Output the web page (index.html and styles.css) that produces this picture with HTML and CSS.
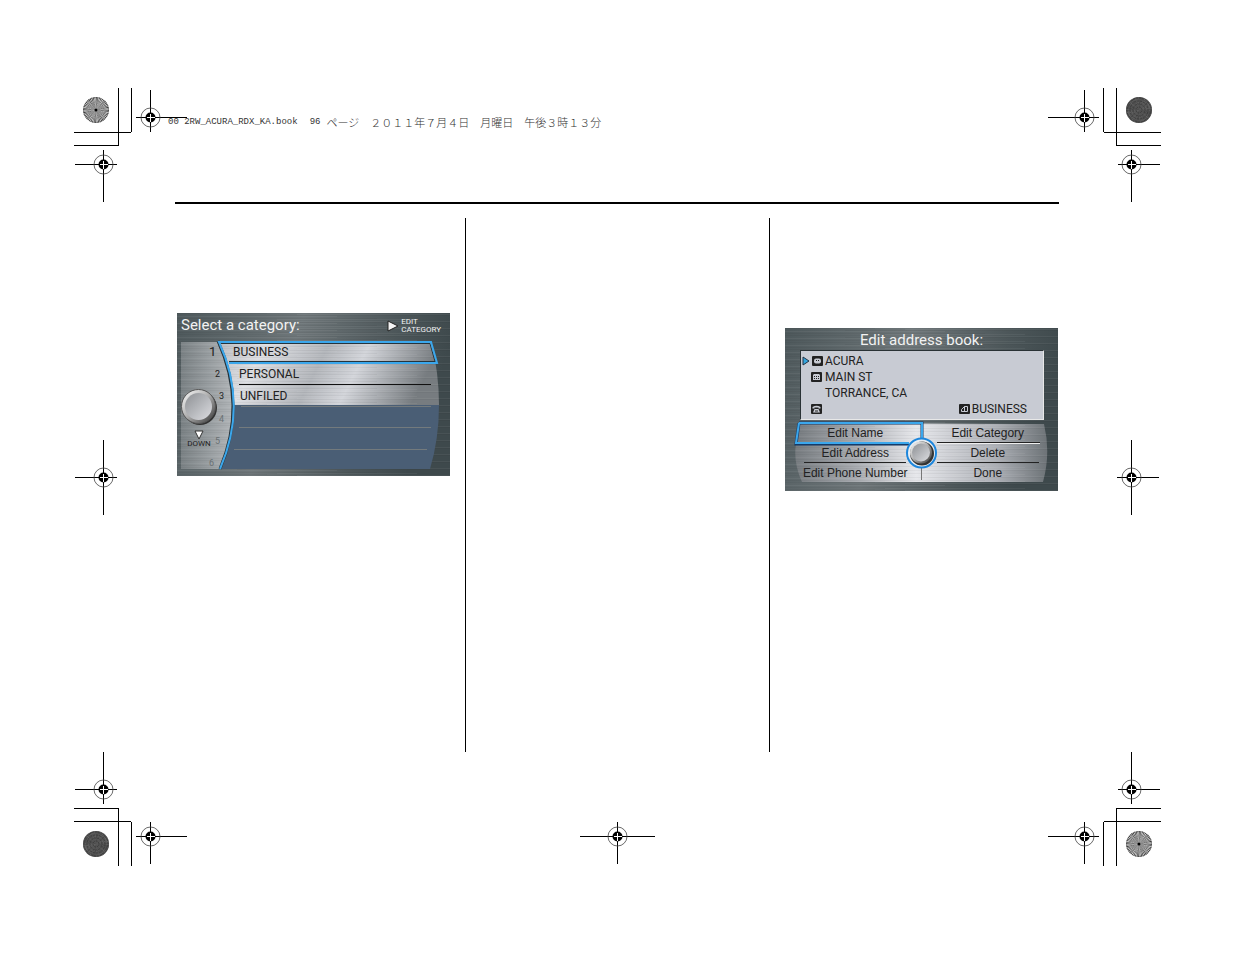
FILE: index.html
```html
<!DOCTYPE html>
<html lang="en">
<head>
    <meta charset="UTF-8">
    <meta name="viewport" content="width=device-width, initial-scale=1.0">
    <title>2RW_ACURA_RDX_KA.book</title>
    <link rel="stylesheet" href="styles.css">
</head>
<body>
    <!-- Shared shapes: register marks, corner crop marks, metal fills -->
    <svg class="defs" width="0" height="0" aria-hidden="true">
        <defs>
            <g id="target">
                <circle r="9.5" fill="none" stroke="#444" stroke-width="0.8"/>
                <circle r="5" fill="#000"/>
                <path d="M-4 0H4M0 -4V4" stroke="#fff" shape-rendering="crispEdges"/>
            </g>
            <g id="corner">
                <path d="M44.5 0V58M57.5 0V44M0 44.5H57M0 57.5H45M76.5 2V44M62 29.5H113M29.5 62V114M1 76.5H43" stroke="#000" fill="none" shape-rendering="crispEdges"/>
                <use href="#target" x="76.5" y="29.5"/>
                <use href="#target" x="29.5" y="76.5"/>
            </g>
            <g id="burst">
                <circle cx="22" cy="22" r="12.5" fill="#eee" stroke="#888" stroke-width="0.8"/>
                <circle cx="22" cy="22" r="6.5" fill="none" stroke="#333" stroke-width="13" pathLength="96" stroke-dasharray="1"/>
                <circle cx="22" cy="22" r="1.5"/>
            </g>
            <g id="disc">
                <circle cx="22" cy="22" r="13" fill="#333"/>
                <circle cx="22" cy="22" r="6.5" fill="none" stroke="#777" stroke-width="13" pathLength="120" stroke-dasharray="1"/>
                <g fill="none" stroke="#3c3c3c" stroke-dasharray="2 1">
                    <circle cx="22" cy="22" r="3"/>
                    <circle cx="22" cy="22" r="6"/>
                    <circle cx="22" cy="22" r="9"/>
                    <circle cx="22" cy="22" r="12"/>
                </g>
            </g>
            <linearGradient id="dark" x2="1" y2="0.2">
                <stop offset="0" stop-color="#4d585b"/>
                <stop offset="0.45" stop-color="#6e7679"/>
                <stop offset="0.8" stop-color="#4c5659"/>
                <stop offset="1" stop-color="#3e494c"/>
            </linearGradient>
            <linearGradient id="silver" x2="1" y2="0.15">
                <stop offset="0" stop-color="#b9bbc0"/>
                <stop offset="0.22" stop-color="#dedfe3"/>
                <stop offset="0.5" stop-color="#b2b5ba"/>
                <stop offset="0.68" stop-color="#d3d5da"/>
                <stop offset="1" stop-color="#777c80"/>
            </linearGradient>
            <linearGradient id="panel" x2="1" y2="0">
                <stop offset="0" stop-color="#7b8285"/>
                <stop offset="1" stop-color="#b2b6b9"/>
            </linearGradient>
            <linearGradient id="keys" x2="1" y2="0">
                <stop offset="0" stop-color="#777c80"/>
                <stop offset="0.25" stop-color="#abaeb3"/>
                <stop offset="0.48" stop-color="#e6e7eb"/>
                <stop offset="0.8" stop-color="#abaeb4"/>
                <stop offset="1" stop-color="#6d7377"/>
            </linearGradient>
            <linearGradient id="rim" x2="1" y2="1">
                <stop offset="0" stop-color="#fff"/>
                <stop offset="0.5" stop-color="#aaa"/>
                <stop offset="1" stop-color="#333"/>
            </linearGradient>
            <linearGradient id="cap" x2="1" y2="1">
                <stop offset="0" stop-color="#8d9094"/>
                <stop offset="1" stop-color="#dcdde1"/>
            </linearGradient>
            <pattern id="brush" width="273" height="7" patternUnits="userSpaceOnUse">
                <path d="M0 0.5H90M60 2.5H273M0 5.5H200" stroke="#000" stroke-opacity="0.04"/>
                <path d="M120 1.5H273M0 3.5H160M100 6.5H240" stroke="#fff" stroke-opacity="0.05"/>
            </pattern>
        </defs>
    </svg>

    <div class="sheet">
        <svg class="corner top-left" width="114" height="114" aria-hidden="true"><use href="#corner"/><use href="#burst"/></svg>
        <svg class="corner top-right" width="114" height="114" aria-hidden="true"><use href="#corner"/><use href="#disc"/></svg>
        <svg class="corner bottom-left" width="114" height="114" aria-hidden="true"><use href="#corner"/><use href="#disc"/></svg>
        <svg class="corner bottom-right" width="114" height="114" aria-hidden="true"><use href="#corner"/><use href="#burst"/></svg>

        <svg class="mark-left" width="44" height="75" aria-hidden="true">
            <path d="M29.5 0V75M1 37.5H43" stroke="#000" shape-rendering="crispEdges"/>
            <use href="#target" x="29.5" y="37.5"/>
        </svg>
        <svg class="mark-right" width="44" height="75" aria-hidden="true">
            <path d="M14.5 0V75M0 37.5H42" stroke="#000" shape-rendering="crispEdges"/>
            <use href="#target" x="14.5" y="37.5"/>
        </svg>
        <svg class="mark-bottom" width="75" height="44" aria-hidden="true">
            <path d="M37.5 0V42M0 14.5H75" stroke="#000" shape-rendering="crispEdges"/>
            <use href="#target" x="37.5" y="14.5"/>
        </svg>

        <header class="book-info" lang="ja">
            <span class="file-name">00 2RW_ACURA_RDX_KA.book</span>
            <span class="file-name">96</span>
            <span>ページ　２０１１年７月４日　月曜日　午後３時１３分</span>
        </header>

        <main class="columns">
            <section class="column">
                <div class="screen category-screen">
                    <svg class="art" viewBox="0 0 273 163" aria-hidden="true">
                        <path fill="url(#dark)" d="M0 0H273V163H0Z"/>
                        <path fill="url(#panel)" d="M4 29H41Q71 92 43 156H4Z"/>
                        <path fill="url(#silver)" d="M41 28H254Q262 60 262 92H56Q55 60 41 28Z"/>
                        <path fill="url(#brush)" d="M0 0H273V163H0Z"/>
                        <path fill="#4a5e75" d="M56 92H262Q262 126 253 156H43Q56 126 56 92Z"/>
                        <path fill="none" stroke="#111" d="M62 71.5H254"/>
                        <path fill="none" stroke="#737a7d" d="M64 93.5H254M62 114.5H254M57 136.5H250"/>
                        <path fill="none" stroke="#26343c" stroke-width="3" d="M41 28Q70 92 43 156"/>
                        <path fill="none" stroke="#26343c" d="M44 30.500H253L258 48.500H52"/>
                        <path fill="none" stroke="#3ba7ec" stroke-width="2" d="M43 156Q71 92 42 29H254L260 50H52"/>
                    </svg>
                    <div class="screen-top">
                        <h2>Select a category:</h2>
                        <button class="edit-category">
                            <svg width="12" height="12" viewBox="0 0 12 12" aria-hidden="true"><path d="M1 1L11 6L1 11Z" fill="#f4f4f4" stroke="#222"/></svg>
                            <span>EDIT<br>CATEGORY</span>
                        </button>
                    </div>
                    <div class="picker">
                        <button class="dial">
                            <svg width="38" height="38" viewBox="0 0 38 38" aria-hidden="true">
                                <circle cx="20" cy="20" r="17" fill="#333"/>
                                <circle cx="18.5" cy="18.5" r="17" fill="url(#rim)" stroke="#555"/>
                                <circle cx="18.5" cy="18.5" r="13.5" fill="url(#cap)"/>
                            </svg>
                            <svg class="down-arrow" width="10" height="10" viewBox="0 0 10 10" aria-hidden="true"><path d="M1 1H9L5 9Z" fill="#fff" stroke="#333"/></svg>
                            <span>DOWN</span>
                        </button>
                        <ol class="categories">
                            <li class="near-end"><button><span class="num current">1</span>BUSINESS</button></li>
                            <li class="between"><button><span class="num">2</span>PERSONAL</button></li>
                            <li class="middle"><button><span class="num">3</span>UNFILED</button></li>
                            <li class="middle empty"><span class="num">4</span></li>
                            <li class="between empty"><span class="num">5</span></li>
                            <li class="near-end empty"><span class="num">6</span></li>
                        </ol>
                    </div>
                </div>
            </section>

            <section class="column column-center"></section>

            <section class="column">
                <div class="screen address-screen">
                    <svg class="art" viewBox="0 0 273 163" aria-hidden="true">
                        <path fill="url(#dark)" d="M0 0H273V163H0Z"/>
                        <path fill="url(#keys)" d="M14 95L259 96Q266 125 258 154H17Q8 134 11 116Z"/>
                        <path fill="url(#brush)" d="M0 0H273V163H0Z"/>
                        <path fill="none" stroke="#222" d="M19 134.5H121M152 134.5H254M152 114.5H255"/>
                        <path fill="none" stroke="#eee" d="M152 115.5H255"/>
                        <path fill="none" stroke="#777" d="M136.5 138V152"/>
                        <path fill="none" stroke="#173a66" stroke-width="3" d="M14 95H137V111M124 116H11L14 95"/>
                        <path fill="none" stroke="#3ba7ec" stroke-width="2" d="M14 95H137V111M124 115H11L14 95"/>
                        <circle cx="136.5" cy="125" r="14.5" fill="#e8edf2" stroke="#1d86dc" stroke-width="2"/>
                        <circle cx="137" cy="125.5" r="12" fill="#333"/>
                        <circle cx="136" cy="124.5" r="11" fill="url(#rim)"/>
                        <circle cx="136" cy="124.5" r="9" fill="url(#cap)"/>
                    </svg>
                    <h2>Edit address book:</h2>
                    <div class="address">
                        <p class="name">
                            <svg class="pointer" width="8" height="10" viewBox="0 0 8 10" aria-hidden="true"><path d="M1 1L7 5L1 9Z" fill="#34a5dd" stroke="#234"/></svg>
                            <svg width="11" height="10" viewBox="0 0 11 10" aria-hidden="true"><rect width="11" height="10" rx="1" fill="#222"/><rect x="2" y="2.5" width="7" height="5" rx="2" fill="#c8cbd3"/><path d="M4 4.5H5M6 4.5H7" stroke="#222"/></svg>
                            ACURA
                        </p>
                        <p>
                            <svg width="11" height="10" viewBox="0 0 11 10" aria-hidden="true"><rect width="11" height="10" rx="1" fill="#222"/><path d="M2 3L3 2H8L9 3V8H2Z" fill="#c8cbd3"/><path d="M3 4.5H8M3 6.5H8" stroke="#222" stroke-dasharray="1"/></svg>
                            MAIN ST
                        </p>
                        <p class="city">TORRANCE, CA</p>
                        <p class="last-line">
                            <svg width="11" height="10" viewBox="0 0 11 10" aria-hidden="true"><rect width="11" height="10" rx="1" fill="#222"/><path d="M1.5 4V3Q5.5 0.5 9.5 3V4.5H7.5V3.5H3.5V4.5H1.5Z" fill="#c8cbd3"/><path d="M3.5 5H7.5L9 8.5H2Z" fill="#c8cbd3"/><path d="M4 7H7" stroke="#222"/></svg>
                            <span class="category">
                                <svg width="11" height="10" viewBox="0 0 11 10" aria-hidden="true"><rect width="11" height="10" rx="1" fill="#222"/><path d="M2.5 7.5V5.5L5.5 2.5H8.5V7.5ZM5.5 2.5V7.5" fill="none" stroke="#c8cbd3"/></svg>
                                BUSINESS
                            </span>
                        </p>
                    </div>
                    <div class="keys">
                        <button>Edit Name</button>
                        <button>Edit Category</button>
                        <button>Edit Address</button>
                        <button>Delete</button>
                        <button>Edit Phone Number</button>
                        <button>Done</button>
                    </div>
                </div>
            </section>
        </main>
    </div>
</body>
</html>
```
FILE: styles.css
```css
body {
    margin: 0;
    background-color: #fff;
    color: #222;
    font-family: Roboto, "Liberation Sans", sans-serif;
}

h2, p, ol {
    margin: 0;
    padding: 0;
}

button {
    padding: 0;
    border: none;
    background: none;
    color: inherit;
    font: inherit;
    cursor: pointer;
}

svg {
    display: block;
    flex: none;
}

.defs {
    position: absolute;
}

/* Printer's sheet: crop marks round the page */
.sheet {
    display: grid;
    grid-template-columns: 114px 1fr 114px;
    grid-template-rows: 114px 1fr 114px;
    box-sizing: border-box;
    min-height: 100vh;
    padding: 88px 74px;
}

.top-left {
    grid-area: 1 / 1;
}

.top-right {
    grid-area: 1 / 3;
    transform: scaleX(-1);
}

.bottom-left {
    grid-area: 3 / 1;
    transform: scaleY(-1);
}

.bottom-right {
    grid-area: 3 / 3;
    transform: scale(-1);
}

.mark-left {
    grid-area: 2 / 1;
    align-self: center;
}

.mark-right {
    grid-area: 2 / 3;
    align-self: center;
    justify-self: end;
}

.mark-bottom {
    grid-area: 3 / 2;
    align-self: end;
    justify-self: center;
}

.book-info {
    grid-area: 1 / 1 / 2 / 4;
    display: flex;
    align-items: center;
    gap: 12px;
    height: 16px;
    padding: 26px 0 0 94px;
    color: #333;
    font-family: "Noto Sans CJK JP", sans-serif;
    font-size: 11px;
    font-weight: 300;
    line-height: 16px;
    white-space: nowrap;
}

.file-name {
    font-family: "Liberation Mono", monospace;
    font-size: 9px;
}

.file-name + span:last-child {
    margin-left: -6px;
}

.columns {
    grid-area: 2 / 1 / 3 / 4;
    display: grid;
    grid-template-columns: 290fr 305fr 289fr;
    margin: 0 102px 0 101px;
    padding-top: 14px;
    border-top: 2px solid #000;
}

.column-center {
    border: solid #000;
    border-width: 0 1px;
}

/* Navigation screens */
.screen {
    position: relative;
    width: 273px;
    height: 163px;
    overflow: hidden;
    font-size: 12px;
}

.screen > :not(.art) {
    position: relative;
}

.art {
    position: absolute;
    top: 0;
    left: 0;
    width: 100%;
}

.screen h2 {
    color: #f2f2f2;
    font-size: 15px;
    font-weight: 400;
    line-height: 24px;
}

.category-screen {
    margin: 95px 0 0 2px;
}

.screen-top {
    display: flex;
    justify-content: space-between;
    height: 28px;
    padding: 0 9px 0 4px;
}

.edit-category {
    display: flex;
    align-items: center;
    gap: 2px;
    height: 26px;
    color: #f2f2f2;
    font-size: 8px;
    line-height: 8px;
    text-align: left;
}

.picker {
    display: grid;
}

.dial {
    grid-area: 1 / 1;
    z-index: 1;
    display: flex;
    flex-direction: column;
    align-items: center;
    align-self: end;
    justify-self: start;
    width: 44px;
    padding-bottom: 25px;
    font-size: 8px;
    line-height: 8px;
}

.down-arrow {
    margin-top: 4px;
}

.categories {
    grid-area: 1 / 1;
    list-style: none;
}

.categories li {
    height: 22px;
    line-height: 22px;
}

.categories button {
    display: flex;
    width: 100%;
    height: 22px;
    line-height: 22px;
    text-align: left;
}

.near-end {
    padding-left: 32px;
}

.between {
    padding-left: 38px;
}

.middle {
    padding-left: 42px;
}

.num {
    width: 24px;
    font-size: 9px;
}

.middle .num {
    width: 21px;
}

.num.current {
    font-size: 13px;
}

.empty {
    color: #6a7174;
}

.address-screen {
    margin: 110px 0 0 15px;
}

.address-screen h2 {
    text-align: center;
}

.address {
    box-sizing: border-box;
    height: 70px;
    margin: -2px 14px 3px 15px;
    padding: 2px 16px 2px 10px;
    border: 1px solid #2a3235;
    border-right-color: #e8e8e8;
    border-bottom-color: #e8e8e8;
    background-color: #c8cbd3;
}

.address p {
    display: flex;
    align-items: center;
    gap: 3px;
    height: 16px;
    line-height: 16px;
}

.address .name {
    gap: 2px;
    margin-left: -9px;
}

.address .city {
    padding-left: 14px;
}

.last-line {
    justify-content: space-between;
}

.category {
    display: flex;
    align-items: center;
    gap: 2px;
}

.keys {
    display: grid;
    grid-template-columns: 1fr 1fr;
    grid-auto-rows: 20px;
    column-gap: 8px;
    padding: 0 8px;
    font-family: "Liberation Sans", sans-serif;
}
```
